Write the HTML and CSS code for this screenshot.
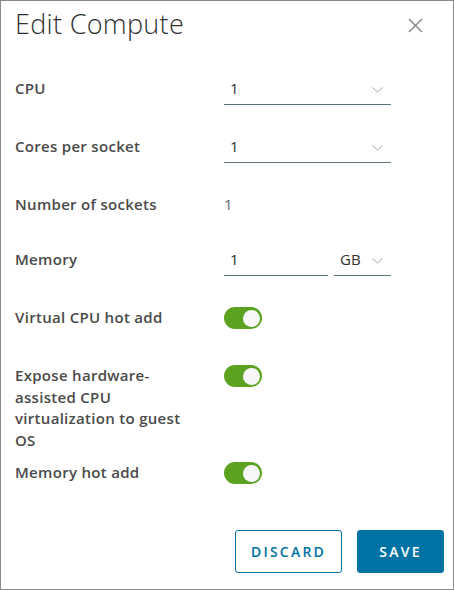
FILE: index.html
```html
<!DOCTYPE html>
<html>
<head>
<meta charset="utf-8">
<link rel="stylesheet" href="styles.css">
</head>
<body>
<div class="dialog">
  <div class="header">
    <h1 class="title">Edit Compute</h1>
    <button class="close" aria-label="Close">
      <svg width="15" height="15" viewBox="0 0 15 15"><path d="M1 1 L14 14 M14 1 L1 14" stroke="#8a8a8a" stroke-width="1.5" fill="none"/></svg>
    </button>
  </div>
  <div class="body">
    <div class="row">
      <div class="label">CPU</div>
      <div class="select wide"><span class="val">1</span><svg class="chev" width="11" height="6" viewBox="0 0 11 6"><path d="M0.5 0.5 L5.5 5 L10.5 0.5" stroke="#a6a6a6" stroke-width="1" fill="none"/></svg></div>
    </div>
    <div class="row">
      <div class="label">Cores per socket</div>
      <div class="select wide"><span class="val">1</span><svg class="chev" width="11" height="6" viewBox="0 0 11 6"><path d="M0.5 0.5 L5.5 5 L10.5 0.5" stroke="#a6a6a6" stroke-width="1" fill="none"/></svg></div>
    </div>
    <div class="row short">
      <div class="label">Number of sockets</div>
      <div class="static">1</div>
    </div>
    <div class="row">
      <div class="label">Memory</div>
      <div class="mem">
        <div class="input"><span class="val">1</span></div>
        <div class="select unit"><span class="val">GB</span><svg class="chev" width="11" height="6" viewBox="0 0 11 6"><path d="M0.5 0.5 L5.5 5 L10.5 0.5" stroke="#a6a6a6" stroke-width="1" fill="none"/></svg></div>
      </div>
    </div>
    <div class="row">
      <div class="label">Virtual CPU hot add</div>
      <div class="toggle"><span class="knob"></span></div>
    </div>
    <div class="row">
      <div class="label">Expose hardware-assisted CPU virtualization to guest OS</div>
      <div class="toggle"><span class="knob"></span></div>
    </div>
    <div class="row">
      <div class="label">Memory hot add</div>
      <div class="toggle"><span class="knob"></span></div>
    </div>
  </div>
  <div class="footer">
    <button class="btn outline">DISCARD</button>
    <button class="btn primary">SAVE</button>
  </div>
</div>
</body>
</html>
```
FILE: styles.css
```css
html, body {
  margin: 0;
  padding: 0;
  background: #fff;
}
.dialog {
  box-sizing: border-box;
  width: 454px;
  height: 590px;
  border: 1px solid #8a8a8a;
  display: flex;
  flex-direction: column;
  font-family: "Open Sans", "Liberation Sans", sans-serif;
  color: #454545;
}
.header {
  display: flex;
  justify-content: space-between;
  align-items: flex-start;
  padding: 5px 30px 0 14px;
}
.title {
  margin: 0;
  font-size: 27px;
  font-weight: 300;
  line-height: 36px;
  letter-spacing: 0.3px;
  color: #313131;
}
.close {
  border: 0;
  background: none;
  padding: 0;
  margin-top: 12px;
  width: 15px;
  height: 15px;
  display: block;
}
.close svg { display: block; }
.body {
  display: flex;
  flex-direction: column;
  gap: 11px;
  padding: 36px 0 0 14px;
}
.row {
  display: flex;
  min-height: 47px;
}
.row.short { min-height: 44px; }
.label {
  width: 209px;
  flex: none;
  font-size: 15px;
  font-weight: 600;
  letter-spacing: 0.3px;
  line-height: 21.5px;
  color: #4a4a4a;
  padding-right: 40px;
  box-sizing: border-box;
}
.select, .input {
  position: relative;
  box-sizing: border-box;
  height: 27px;
  border-bottom: 1px solid #5f737f;
  font-size: 15px;
  line-height: 21.5px;
  color: #313131;
}
.select.wide { width: 167px; }
.val { padding-left: 6px; }
.chev {
  position: absolute;
  right: 8px;
  top: 9px;
}
.static {
  font-size: 15px;
  line-height: 21.5px;
  color: #666;
}
.mem {
  display: flex;
  gap: 6px;
}
.input { width: 104px; }
.select.unit { width: 57px; }
.toggle {
  width: 38px;
  height: 22px;
  border-radius: 11px;
  background: #5aa220;
  position: relative;
  box-sizing: border-box;
}
.knob {
  position: absolute;
  right: 2px;
  top: 2.5px;
  width: 17px;
  height: 17px;
  border-radius: 50%;
  background: #f7f7f7;
}
.footer {
  margin-top: auto;
  display: flex;
  justify-content: flex-end;
  gap: 15px;
  padding: 0 9px 16px 0;
}
.btn {
  box-sizing: border-box;
  height: 43px;
  border-radius: 3px;
  font-family: "Open Sans", "Liberation Sans", sans-serif;
  font-size: 14px;
  font-weight: 600;
  letter-spacing: 0.16em;
  padding: 0;
}
.outline {
  width: 107px;
  background: #fff;
  color: #0072a3;
  border: 1px solid #0072a3;
}
.primary {
  width: 87px;
  background: #0072a3;
  color: #fff;
  border: 1px solid #0072a3;
}
```
